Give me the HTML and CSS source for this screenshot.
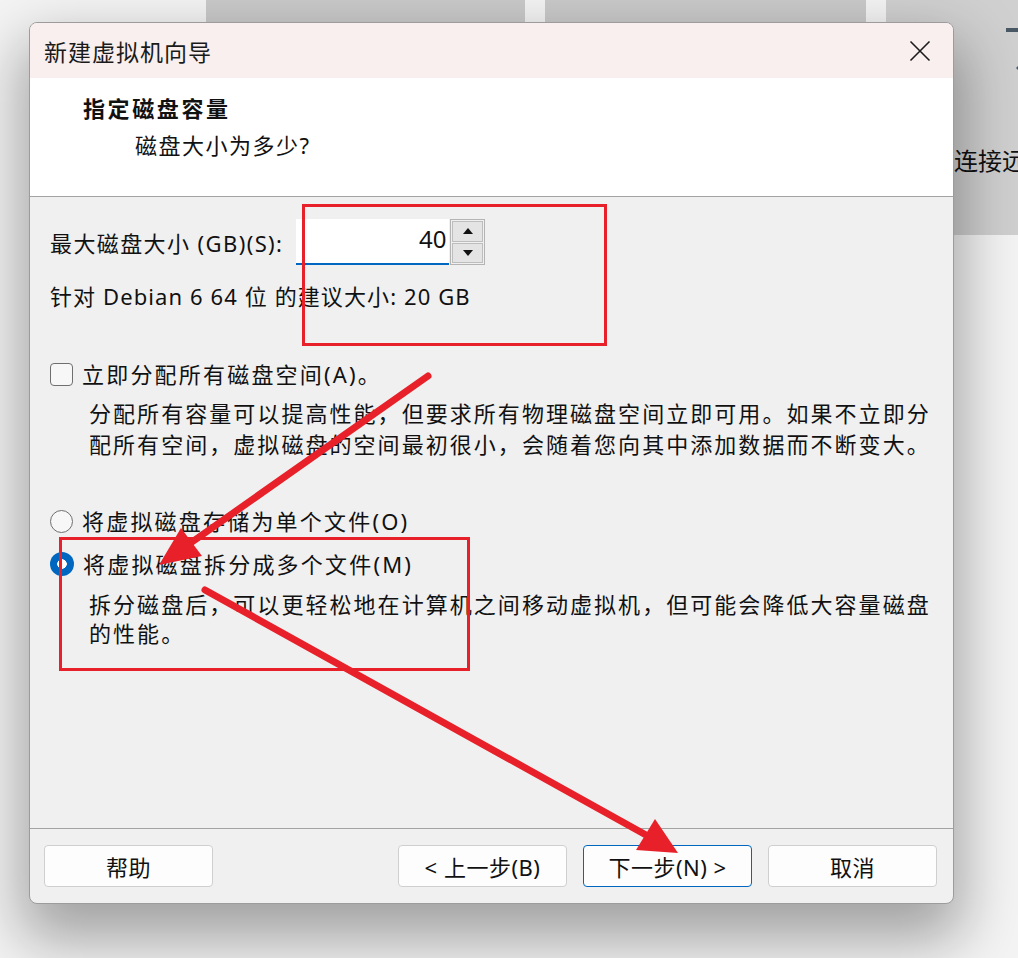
FILE: index.html
```html
<!DOCTYPE html>
<html lang="zh-CN">
<head>
<meta charset="utf-8">
<title>新建虚拟机向导</title>
<link rel="stylesheet" href="styles.css">
</head>
<body>
<div class="desktop">
  <div class="card card-a"></div>
  <div class="card card-b"></div>
  <div class="card card-c">
    <svg class="app-icon" width="40" height="70" viewBox="0 0 40 70">
      <rect x="10" y="48" width="24" height="4" fill="#4b5966"/>
      <rect x="22" y="48" width="6" height="12" fill="#4b5966"/>
      <path d="M20 88 L34 74 L34 102 Z" fill="#4b5966"/>
    </svg>
    <div class="card-text">连接远</div>
  </div>
</div>

<div class="dialog">
  <div class="titlebar">
    <span class="title">新建虚拟机向导</span>
    <svg class="close" width="22" height="22" viewBox="0 0 22 22">
      <path d="M1.5 1.5 L20.5 20.5 M20.5 1.5 L1.5 20.5" stroke="#1c1c1c" stroke-width="1.6" fill="none"/>
    </svg>
  </div>
  <div class="header">
    <div class="h-title">指定磁盘容量</div>
    <div class="h-sub">磁盘大小为多少?</div>
  </div>
  <div class="body">
    <div class="size-row">
      <span class="lbl">最大磁盘大小 (GB)(S):</span>
      <div class="spin">
        <div class="spin-input">40</div>
        <div class="spin-btns">
          <div class="spin-btn"><span class="tri-up"></span></div>
          <div class="spin-btn"><span class="tri-down"></span></div>
        </div>
      </div>
    </div>
    <div class="suggest">针对 Debian 6 64 位 的建议大小: 20 GB</div>

    <div class="opt check-row">
      <span class="checkbox"></span>
      <span>立即分配所有磁盘空间(A)。</span>
    </div>
    <div class="desc">分配所有容量可以提高性能，但要求所有物理磁盘空间立即可用。如果不立即分<br>配所有空间，虚拟磁盘的空间最初很小，会随着您向其中添加数据而不断变大。</div>

    <div class="opt radio-row first">
      <span class="radio"></span>
      <span>将虚拟磁盘存储为单个文件(O)</span>
    </div>
    <div class="opt radio-row second">
      <span class="radio on"></span>
      <span>将虚拟磁盘拆分成多个文件(M)</span>
    </div>
    <div class="desc desc2">拆分磁盘后，可以更轻松地在计算机之间移动虚拟机，但可能会降低大容量磁盘<br>的性能。</div>
  </div>
  <div class="footer">
    <button class="btn">帮助</button>
    <div class="spacer"></div>
    <button class="btn">&lt; 上一步(B)</button>
    <button class="btn primary">下一步(N) &gt;</button>
    <button class="btn">取消</button>
  </div>
</div>

<svg class="annot" width="1018" height="958" viewBox="0 0 1018 958">
  <rect x="303.5" y="205.5" width="302" height="139" fill="none" stroke="#e8202a" stroke-width="3"/>
  <rect x="60.5" y="538.5" width="408" height="131" fill="none" stroke="#e8202a" stroke-width="3"/>
  <line x1="428" y1="376" x2="192" y2="542" stroke="#e8202a" stroke-width="7" stroke-linecap="round"/>
  <polygon points="159,565 181,528 202,556" fill="#e8202a"/>
  <line x1="205" y1="590" x2="646" y2="835" stroke="#e8202a" stroke-width="7" stroke-linecap="round"/>
  <polygon points="678,853 636,850 655,819" fill="#e8202a"/>
</svg>
</body>
</html>
```
FILE: styles.css
```css
html, body {
  margin: 0;
  padding: 0;
}
body {
  width: 1018px;
  height: 958px;
  overflow: hidden;
  position: relative;
  background: #f4f4f4;
  font-family: "Noto Sans", "Noto Sans CJK SC", sans-serif;
  color: #111;
}
.desktop {
  position: absolute;
  inset: 0;
}
.card {
  position: absolute;
  top: -20px;
  height: 255px;
  background: #cacaca;
}
.card-a { left: 206px; width: 319px; }
.card-b { left: 545px; width: 321px; }
.card-c { left: 886px; width: 132px; overflow: hidden; background: #d0d0d0; }
.app-icon {
  position: absolute;
  left: 110px;
  top: 0;
  overflow: visible;
}
.card-text {
  position: absolute;
  left: 68px;
  top: 164px;
  font-size: 24px;
  line-height: 32px;
  white-space: nowrap;
  font-family: "Noto Sans CJK SC", sans-serif;
}
.dialog {
  position: absolute;
  left: 29px;
  top: 22px;
  width: 923px;
  height: 880px;
  border: 1px solid #9c9c9c;
  border-radius: 8px;
  overflow: hidden;
  display: flex;
  flex-direction: column;
  background: #f0f0f0;
  box-shadow: 0 28px 60px 8px rgba(0, 0, 0, 0.34);
}
.titlebar {
  height: 55px;
  flex: none;
  background: #f8efee;
  display: flex;
  align-items: center;
  justify-content: space-between;
  padding: 0 22px 0 14px;
}
.title {
  font-family: "Noto Sans CJK SC", sans-serif;
  font-size: 23px;
  letter-spacing: 1px;
  color: #1a1a1a;
}
.close { display: block; }
.header {
  height: 119px;
  flex: none;
  background: #fff;
  border-bottom: 1px solid #a3a3a3;
  box-sizing: border-box;
  padding: 14px 0 0 53px;
}
.h-title {
  font-family: "Noto Sans CJK SC", sans-serif;
  font-size: 22px;
  font-weight: 700;
  line-height: 30px;
  letter-spacing: 2.6px;
}
.h-sub {
  font-size: 22px;
  line-height: 32px;
  margin-top: 7px;
  padding-left: 52px;
  letter-spacing: 1.5px;
}
.body {
  flex: 1;
  padding: 22px 20px 0 20px;
  font-size: 22px;
  letter-spacing: 2.2px;
  white-space: nowrap;
}
.size-row {
  display: flex;
  align-items: center;
  height: 46px;
}
.lbl {
  flex: none;
  margin-right: 13px;
  letter-spacing: 1.4px;
}
.spin {
  display: flex;
  height: 46px;
}
.spin-input {
  width: 153px;
  height: 46px;
  box-sizing: border-box;
  background: #fff;
  border-bottom: 2px solid #0067c0;
  text-align: right;
  font-size: 24px;
  line-height: 40px;
  padding-right: 3px;
  letter-spacing: 0;
}
.spin-btns {
  display: flex;
  flex-direction: column;
  border: 1px solid #b4b4b4;
  margin-left: 1px;
  padding: 1px;
  gap: 1px;
  box-sizing: border-box;
  height: 46px;
}
.spin-btn {
  width: 29px;
  flex: 1;
  background: #e4e4e4;
  border: 1px solid #bdbdbd;
  display: flex;
  align-items: center;
  justify-content: center;
}
.tri-up {
  width: 0; height: 0;
  border-left: 5px solid transparent;
  border-right: 5px solid transparent;
  border-bottom: 6px solid #111;
}
.tri-down {
  width: 0; height: 0;
  border-left: 5px solid transparent;
  border-right: 5px solid transparent;
  border-top: 6px solid #111;
}
.suggest {
  margin-top: 16px;
  line-height: 30px;
  letter-spacing: 1.1px;
}
.opt {
  display: flex;
  align-items: center;
  gap: 9px;
  line-height: 30px;
}
.check-row { margin-top: 48px; }
.checkbox {
  width: 21px;
  height: 21px;
  border: 1.5px solid #6f6f6f;
  border-radius: 4px;
  flex: none;
  background: #f7f7f7;
}
.desc {
  margin-top: 9px;
  padding-left: 39px;
  line-height: 31px;
  letter-spacing: 2.05px;
}
.radio-row.first { margin-top: 46px; }
.radio-row.second { margin-top: 13px; }
.radio {
  width: 21px;
  height: 21px;
  border: 1.5px solid #6f6f6f;
  border-radius: 50%;
  flex: none;
  box-sizing: content-box;
  background: #f7f7f7;
}
.radio.on {
  width: 24px;
  height: 24px;
  border: none;
  background: radial-gradient(circle, #fff 0 4.5px, #0067c0 5px);
}
.desc2 {
  margin-top: 11px;
  line-height: 29px;
}
.footer {
  height: 75px;
  flex: none;
  border-top: 1px solid #a3a3a3;
  box-sizing: border-box;
  display: flex;
  align-items: flex-start;
  padding: 16px 16px 0 14px;
  gap: 16px;
}
.spacer { flex: 1; }
.btn {
  width: 169px;
  height: 42px;
  background: #fdfdfd;
  border: 1px solid #cfcfcf;
  border-radius: 4px;
  font-family: "Noto Sans", "Noto Sans CJK SC", sans-serif;
  font-size: 22px;
  color: #111;
  padding: 0;
  letter-spacing: 0.5px;
}
.btn.primary {
  border-color: #0067c0;
}
.annot {
  position: absolute;
  left: 0;
  top: 0;
  pointer-events: none;
}
```
